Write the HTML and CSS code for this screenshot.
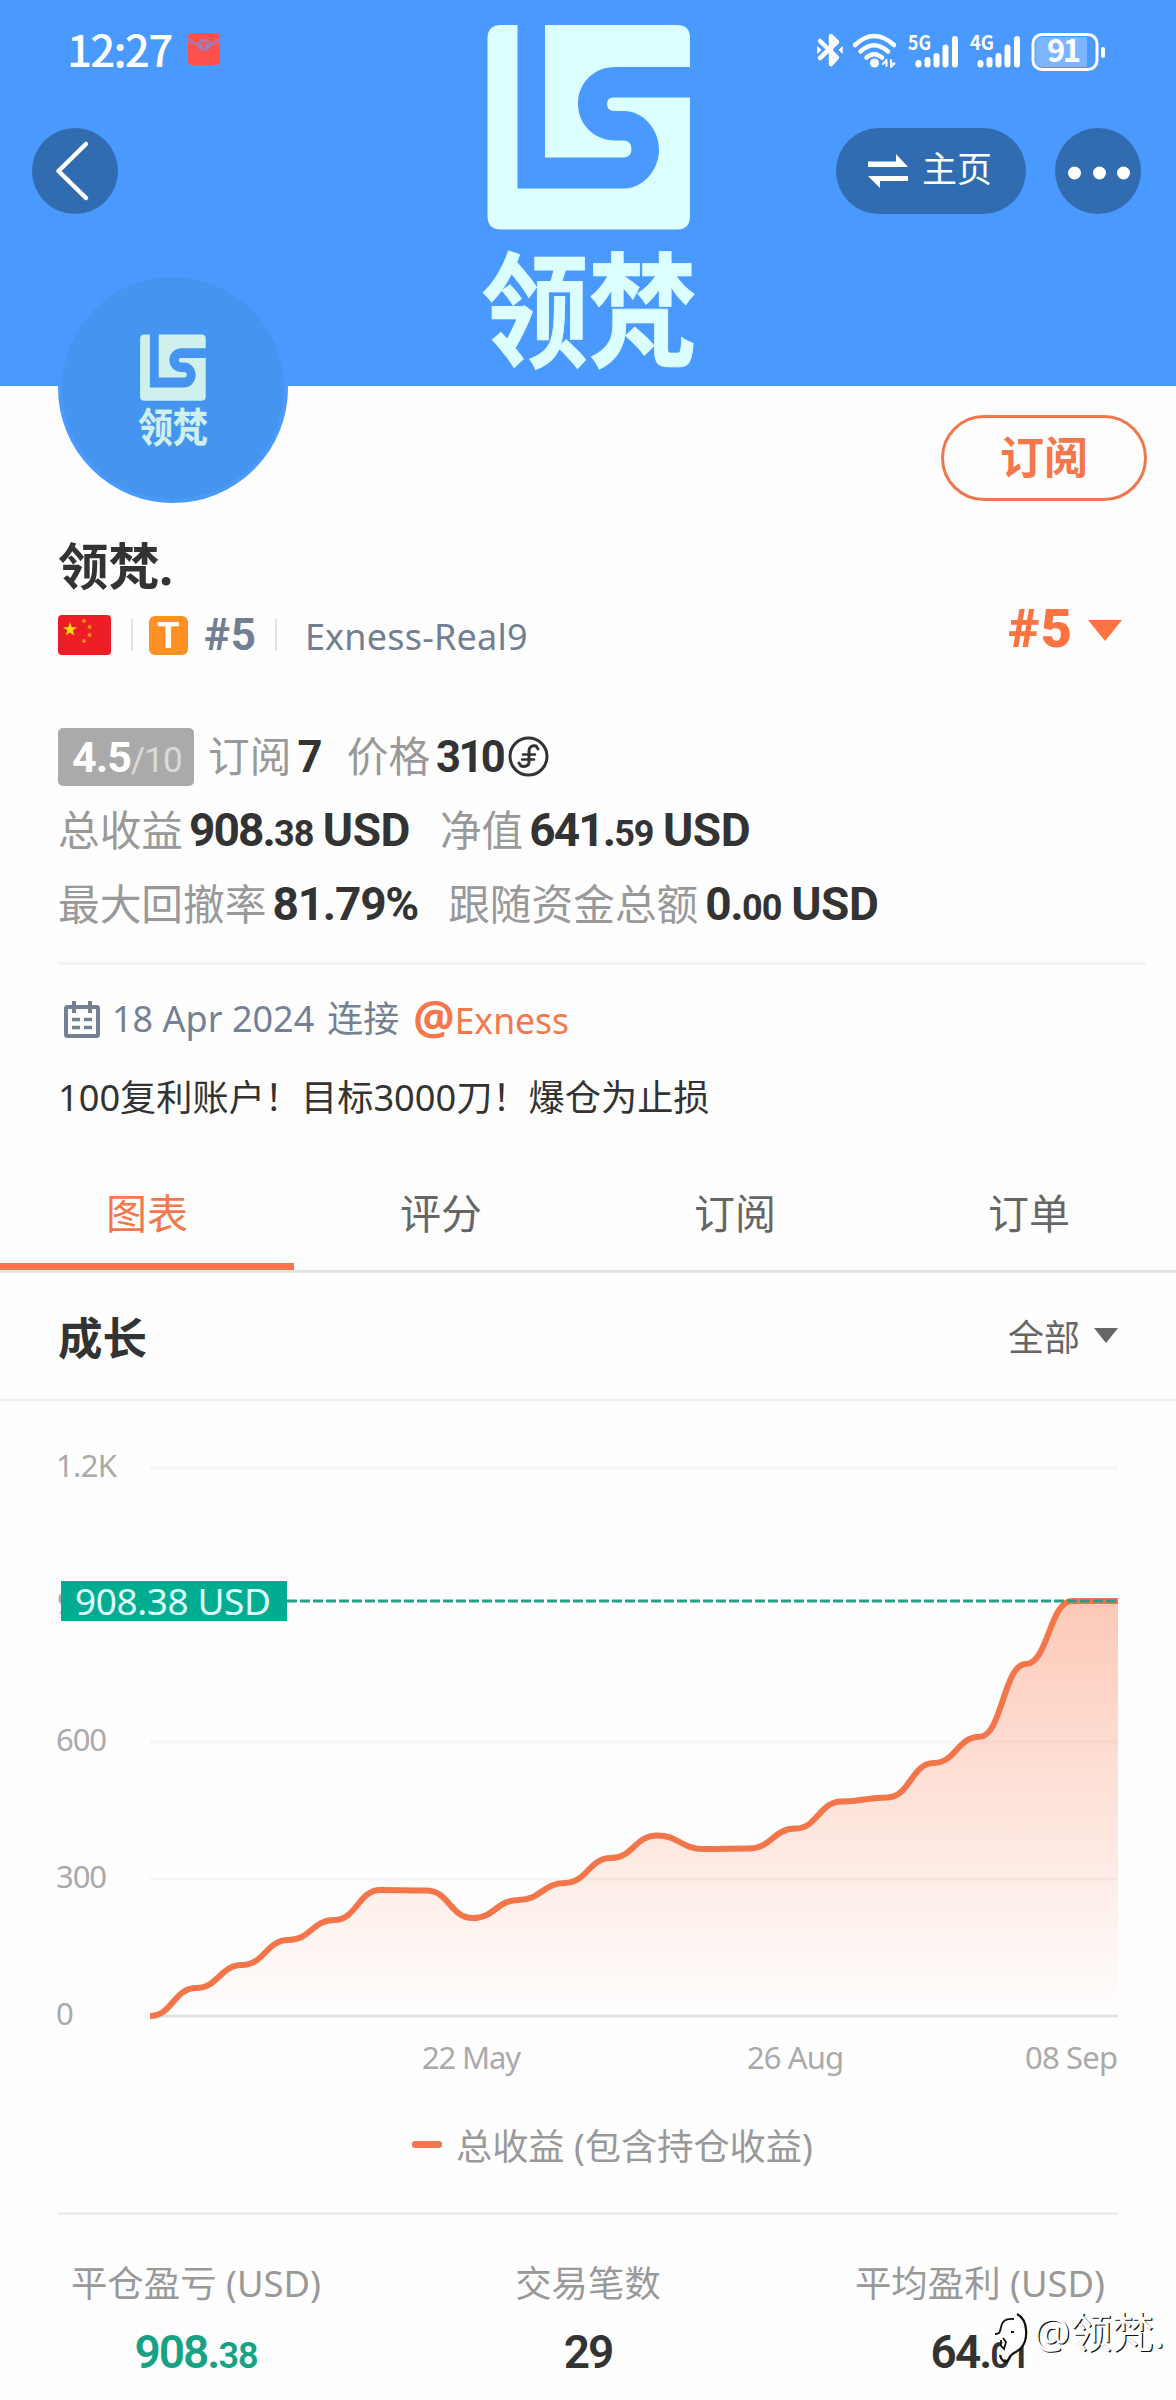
FILE: index.html
```html
<!DOCTYPE html>
<html lang="zh-CN">
<head>
<meta charset="utf-8">
<title>领梵.</title>
<link rel="stylesheet" href="styles.css">
</head>
<body>
<svg width="0" height="0" class="defs">
  <symbol id="logo" viewBox="0 0 216 350">
    <path d="M20 0H36.500V163.500H143C162 163.500 178 145 178 124.500S162 86 143 86H133Q126 86 126 79T133 72.500H209V191Q209 204.500 196 204.500H20Q6.500 204.500 6.500 191V13.500Q6.500 0 20 0Z"/>
    <path d="M64 0H196Q209 0 209 13V42H134C113 42 97 58 97 78.500S113 115.500 134 115.500H142Q150.500 115.500 150.500 124T142 132.500H64Z"/>
    <text class="logo-name" transform="translate(0 332) scale(1 1.15)" textLength="215">领梵</text>
  </symbol>
</svg>
<main class="page">
  <header class="cover">
    <svg class="cover-logo" width="216" height="350"><use href="#logo"/></svg>
    <div class="status">
      <span class="clock">12:27</span>
      <svg class="packet" width="32" height="34" viewBox="0 0 32 34">
        <rect y="1" width="32" height="32" rx="4" fill="#ff514d"/>
        <path d="M0 8Q8 11 10.500 14A6 6 0 0 0 21.500 14Q24 11 32 8" fill="none" stroke="#a47bb4" stroke-width="2.500"/>
        <circle cx="16" cy="12" r="5.500" fill="#a47bb4"/><path d="M13.500 9.500l2.500 3 2.500-3M16 12v4.500" stroke="#ff514d" stroke-width="1.800" fill="none"/>
      </svg>
      <svg class="signals" width="290" height="40" viewBox="0 0 290 40" fill="none" stroke="#fff" stroke-linecap="round" stroke-linejoin="round">
        <path d="M3 11L20 27.500L14 34V6L20 12L3 28" stroke-width="4.500"/>
        <path d="M1 17l3 3-3 3zM25 17l-3 3 3 3z" fill="#fff" stroke-width="1"/>
        <g stroke-width="4.500"><path d="M38 15Q57 -3 77 15"/><path d="M43.500 21.500Q57 9 71 21.500"/><path d="M49.500 27.500Q57 21 65 27.500"/></g>
        <circle cx="57.500" cy="33" r="4.500" fill="#fff" stroke="none"/>
        <path d="M66 34L69.500 30V36M74 30V37L77.500 33.500H74" stroke-width="2"/>
        <g stroke-width="6"><path d="M101.500 33v1.500M110.500 30v4.500M119.500 26v8.500M128.500 17.500v17M138 9v25.500"/><path d="M163.500 33v1.500M172.500 30v4.500M181.500 26v8.500M190.500 17.500v17M200 9v25.500"/></g>
        <g class="net"><text x="91" y="20" textLength="23" lengthAdjust="spacingAndGlyphs">5G</text><text x="153" y="20" textLength="24" lengthAdjust="spacingAndGlyphs">4G</text></g>
        <path d="M225 7H270V37H225Q218.500 37 218.500 30V14Q218.500 7 225 7Z" fill="#fff" fill-opacity=".28" stroke="none"/>
        <rect x="216" y="4.500" width="64" height="35" rx="9" stroke-width="3"/>
        <path d="M286 19v7" stroke-width="4"/>
        <text class="level" x="230" y="32" textLength="34">91</text>
      </svg>
    </div>
    <nav class="actions">
      <button class="round back"><svg width="86" height="86" viewBox="0 0 86 86"><path d="M54 16L26.500 43L54 70" fill="none" stroke="#fff" stroke-width="4.500" stroke-linecap="round" stroke-linejoin="round"/></svg></button>
      <button class="home">
        <svg width="40" height="36" viewBox="0 0 40 36" fill="#fff"><path d="M0 8.500H28V1L40 14H0Z"/><path d="M40 28H12V35L0 23H40Z"/></svg>
        <span>主页</span>
      </button>
      <button class="round"><svg width="86" height="86" viewBox="0 0 86 86" fill="#fff"><circle cx="19.500" cy="45" r="6.500"/><circle cx="44.500" cy="45" r="6.500"/><circle cx="68.500" cy="45" r="6.500"/></svg></button>
    </nav>
  </header>

  <section class="profile">
    <div class="top">
      <div class="avatar"><svg width="70" height="114.500"><use href="#logo"/></svg></div>
      <button class="subscribe">订阅</button>
    </div>
    <h1 class="name">领梵.</h1>
    <div class="meta">
      <div class="account">
        <svg class="flag" width="53" height="40" viewBox="0 0 53 40"><rect width="53" height="40" rx="4" fill="#ee1c25"/><path d="M12 7l1.700 5.200h5.300l-4.300 3.200 1.600 5.100-4.300-3.100-4.300 3.100 1.600-5.100-4.300-3.200h5.300z" fill="#ffde00"/><g fill="#f98a20"><circle cx="26" cy="6" r="2"/><circle cx="31.500" cy="12" r="2"/><circle cx="31.500" cy="20" r="2"/><circle cx="26" cy="26" r="2"/></g></svg>
        <i class="sep"></i>
        <span class="badge">T</span>
        <b class="rank">#5</b>
        <i class="sep second"></i>
        <span class="server">Exness-Real9</span>
      </div>
      <div class="select"><b>#5</b><svg width="34" height="21" viewBox="0 0 34 21"><path d="M0 0H34L17 21Z" fill="#ff7340"/></svg></div>
    </div>

    <div class="facts">
      <p class="fact-row"><span class="score"><b>4.5</b>/10</span><span class="k">订阅</span><b class="v count">7</b><span class="k price">价格</span><b class="v count">310</b><svg class="coin" width="41" height="41" viewBox="0 0 41 41" fill="none" stroke="#333" stroke-linecap="round"><circle cx="20.500" cy="20.500" r="18.500" stroke-width="3"/><path d="M28 10C24 9 21 11 21 15V26C21 30 17 31 13 30M28 10L30 13M13 30L11 27" stroke-width="3"/><path d="M15 18.500H27M14 23.500H26" stroke-width="2.500"/></svg></p>
      <p class="fact-row"><span class="k">总收益</span><b class="v">908.<small>38</small> <em>USD</em></b><span class="k second">净值</span><b class="v">641.<small>59</small> <em>USD</em></b></p>
      <p class="fact-row"><span class="k">最大回撤率</span><b class="v pct">81.79%</b><span class="k second">跟随资金总额</span><b class="v zero">0.<small>00</small> <em>USD</em></b></p>
    </div>

    <div class="connected">
      <svg width="36" height="38" viewBox="0 0 36 38" fill="none" stroke="#748094" stroke-width="4"><rect x="2" y="6" width="32" height="29" rx="1.500"/><path d="M10 0V12M26 0V12"/><path d="M8 18.500H16M20 18.500H28M8 26.500H16M20 26.500H28" stroke-width="3.500"/></svg>
      <span class="date">18 Apr 2024</span><span>连接</span><a class="broker"><b>@</b>Exness</a>
    </div>
    <p class="about">100复利账户！目标3000刀！爆仓为止损</p>
  </section>

  <nav class="tabs"><a class="tab active">图表</a><a class="tab">评分</a><a class="tab">订阅</a><a class="tab">订单</a></nav>

  <section class="growth">
    <div class="growth-head">
      <h2>成长</h2>
      <div class="range">全部 <svg width="24" height="15" viewBox="0 0 24 15"><path d="M0 0H24L12 15Z" fill="#666"/></svg></div>
    </div>
    <svg class="chart" width="1176" height="700" viewBox="0 1401 1176 700">
      <defs><linearGradient id="fill" x1="0" y1="0" x2="0" y2="1"><stop offset="0" stop-color="#fb7446" stop-opacity=".38"/><stop offset="1" stop-color="#fb7446" stop-opacity="0"/></linearGradient></defs>
      <path d="M150 1468H1118M150 1742H1118M150 1879H1118" class="grid"/>
      <path d="M150 2016H1118" class="axis"/>
      <g class="y-labels">
        <text x="56" y="1477" textLength="61">1.2K</text>
        <text x="57" y="1614" textLength="51">900</text>
        <text x="56" y="1751" textLength="51">600</text>
        <text x="56" y="1888" textLength="51">300</text>
        <text x="56" y="2025">0</text>
        <text x="422" y="2069" textLength="99">22 May</text>
        <text x="747" y="2069" textLength="97">26 Aug</text>
        <text x="1025" y="2069" textLength="93">08 Sep</text>
      </g>
      <path id="area" fill="url(#fill)"/>
      <path id="line" class="line"/>
      <path d="M287 1601H1118" class="dash"/>
      <rect x="61" y="1581" width="226" height="40" fill="#00ad90"/>
      <text x="75" y="1615" textLength="196" class="current">908.38 USD</text>
    </svg>
    <div class="legend"><i></i>总收益 (包含持仓收益)</div>
    <div class="totals">
      <div><span>平仓盈亏 (USD)</span><b class="gain">908.<small>38</small></b></div>
      <div><span>交易笔数</span><b>29</b></div>
      <div><span>平均盈利 (USD)</span><b>64.<small>01</small></b></div>
    </div>
  </section>
  <div class="watermark">
    <svg width="41" height="58" viewBox="0 0 41 58"><path d="M8 25C9 10 18 4 27 6C37 12 36 34 28 41C20 45 18 45 15 52L10 50L9 36L12 34L8 25Z" fill="#fff"/><path d="M3 26C8 26 8 24 9 19C10 13 14 10 22 11M9 32V38L12 41L14 34L11 30M19 24H22" fill="none" stroke="#111" stroke-width="1.800"/><path d="M25 6C37 12 36 33 29 40C22 47 20 43 17 51C14 57 9 52 8 47" fill="none" stroke="#111" stroke-width="2.200"/></svg>
    <span>@领梵.</span>
  </div>
</main>
<script src="chart.js"></script>
</body>
</html>
```
FILE: styles.css
```css
* { box-sizing: border-box; margin: 0; padding: 0; }
body { background: #fff; font-family: "Noto Sans", "Noto Sans CJK SC", sans-serif; color: #333; }
button { border: 0; font-family: inherit; }
svg { display: block; flex: none; overflow: visible; }
.defs { position: absolute; }
.page { position: relative; width: 1176px; height: 2400px; overflow: hidden; background: #fefefe; }

.cover { position: relative; height: 386px; background: #4999ff; color: #fff; }
.cover-logo { position: absolute; left: 481px; top: 25px; color: #dcffff; fill: #dcffff; }
.logo-name { font: 700 108px "Noto Sans CJK SC", sans-serif; stroke: currentColor; stroke-width: 0.6px; stroke-linejoin: round; }
.status { display: flex; align-items: flex-start; height: 128px; padding: 30px 69px 0 67px; }
.clock { font: 500 44px/37px "Noto Sans CJK SC", sans-serif; letter-spacing: -1.8px; width: 105px; white-space: nowrap; }
.packet { margin: 2px 0 0 16px; }
.signals { margin-left: auto; }
.net text { font: 700 20px "Noto Sans CJK SC", sans-serif; fill: #fff; stroke: none; }
.level { font: 700 31px "Noto Sans CJK SC", sans-serif; fill: #fff; stroke: none; }
.actions { display: flex; padding: 0 35px 0 32px; }
.round, .home { background: #326cb0; border-radius: 43px; height: 86px; color: #fff; }
.round { width: 86px; }
.back { margin-right: auto; }
.home { width: 190px; margin-right: 29px; display: flex; align-items: center; gap: 14px; padding-left: 32px; font-size: 35px; line-height: 40px; }
.home span { padding-bottom: 4px; }

.profile { padding: 0 29px 0 58px; height: 771px; }
.top { display: flex; justify-content: space-between; height: 150px; }
.avatar { position: relative; width: 230px; height: 230px; margin-top: -113px; border-radius: 50%; border: 4px solid #4999ff; background: #4594ef; padding: 57px 0 0 76px; }
.avatar svg { color: #d0f0ee; fill: #d0f0ee; }
.subscribe { width: 206px; height: 86px; margin-top: 29px; border: 3px solid #ee774c; border-radius: 43px; background: none; color: #f5774b; font-size: 44px; line-height: 76px; font-weight: 700; padding-bottom: 3px; }
.name { font-size: 50.500px; line-height: 60px; height: 69px; }
.meta { display: flex; justify-content: space-between; height: 114px; }
.account { display: flex; align-items: center; height: 40px; margin-top: 10px; line-height: 40px; color: #727f92; }
.sep { width: 2px; height: 32px; margin: 0 16px 0 20px; background: #e4e4e4; }
.sep.second { margin: 0 28px 0 18px; }
.badge { width: 39px; height: 39px; border-radius: 6px; background: #ff9026; color: #fff; font: 700 36px/40px Roboto, sans-serif; text-align: center; }
.rank { font: 700 44px/40px Roboto, sans-serif; letter-spacing: 0.8px; margin-left: 16px; }
.server { font-size: 36px; letter-spacing: 0.2px; white-space: nowrap; padding-top: 3px; }
.select { display: flex; gap: 15px; margin-right: 25px; color: #ff7340; font: 700 54px/48px Roboto, sans-serif; letter-spacing: 1px; }
.select svg { margin-top: 15px; }

.facts { height: 246px; border-bottom: 3px solid #f3f3f3; }
.fact-row { display: flex; align-items: baseline; height: 74px; line-height: 74px; font-size: 41.700px; white-space: nowrap; }
.k { color: #999; margin-right: 6px; }
.k.price { margin-left: 27px; }
.k.second { margin-left: 30px; }
.v { font: 700 46px/74px Roboto, sans-serif; letter-spacing: -1.900px; }
.v.zero { margin-left: 1px; letter-spacing: -1.500px; }
.v.count { font-size: 43.500px; letter-spacing: -2.600px; }
.v.pct { letter-spacing: -1.200px; }
.v small { font-size: 36px; letter-spacing: -1px; }
.v em { font-style: normal; letter-spacing: -0.5px; }
.score { width: 136px; height: 58px; line-height: 58px; border-radius: 5px; background: #aaa; color: #dadada; font-family: Roboto, sans-serif; font-size: 35px; letter-spacing: -1px; padding-left: 14px; margin-right: 14px; }
.score b { font-size: 43px; color: #fff; }
.coin { align-self: center; margin-left: 5px; }

.connected { display: flex; height: 77px; padding: 28px 0 0 6px; line-height: 52px; font-size: 36px; color: #748094; white-space: nowrap; }
.connected svg { margin: 8px 12px 0 0; }
.date { margin-right: 13px; }
.broker { margin-left: 14px; color: #f5774b; font-size: 35.500px; line-height: 46px; }
.broker b { font-size: 46px; line-height: 46px; }
.about { font-size: 36.200px; line-height: 50px; margin-top: 30px; }

.tabs { display: flex; height: 116px; border-bottom: 3px solid #e2e2e2; }
.tab { flex: 1; text-align: center; font-size: 41px; line-height: 112px; color: #666; }
.tab.active { color: #f5774b; border-bottom: 7px solid #f5774b; }

.growth-head { display: flex; justify-content: space-between; align-items: center; height: 128px; padding: 0 58px 2px; border-bottom: 2px solid #f0f0f0; }
.growth-head h2 { font-size: 44.500px; }
.range { display: flex; align-items: center; gap: 14px; font-size: 36px; color: #666; }
.grid { stroke: #f6f6f6; stroke-width: 3; }
.axis { stroke: #e2e2e2; stroke-width: 3; }
.y-labels { font-size: 31px; fill: #aaa; }
.line { fill: none; stroke: #f3764a; stroke-width: 6; }
.dash { stroke: #27a085; stroke-width: 3; stroke-dasharray: 10 3; }
.current { font-size: 37px; fill: #dfffff; }
.legend { display: flex; align-items: center; height: 86px; padding-left: 412px; margin-bottom: 25px; font-size: 36.200px; color: #999; white-space: pre; }
.legend i { width: 30px; height: 7px; border-radius: 3px; background: #ee7950; margin-right: 14px; }
.totals { display: flex; border-top: 3px solid #eee; margin: 0 58px; padding-top: 41px; }
.totals div { flex: 1; display: flex; flex-direction: column; align-items: center; }
.totals div:first-child { margin-left: -58px; }
.totals div:last-child { margin-right: -58px; }
.totals span { font-size: 36.400px; line-height: 54px; color: #999; white-space: nowrap; }
.totals b { font: 600 46px/54px Roboto, sans-serif; letter-spacing: -2px; margin-top: 15px; }
.totals small { font-size: 36px; letter-spacing: -1px; }
.gain { color: #17a286; }

.watermark { position: absolute; left: 992px; top: 2308px; display: flex; color: #fff; font-size: 41.500px; line-height: 49px; text-shadow: 1.200px 1.200px 0 #111; white-space: nowrap; }
```
FILE: chart.js
```js
const values = [2016, 1988, 1965, 1940, 1920, 1890, 1890.5, 1918, 1900, 1883, 1858, 1835.5, 1849, 1848.5, 1828.6, 1801.6, 1797.5, 1763, 1736.7, 1664, 1601, 1601];
const step = 968 / (values.length - 1);
let d = `M150 ${values[0]}`;
for (let i = 1; i < values.length; i++) {
  const x = 150 + i * step;
  d += `C${x - step * 0.52} ${values[i - 1]} ${x - step * 0.48} ${values[i]} ${x} ${values[i]}`;
}
document.getElementById('line').setAttribute('d', d);
document.getElementById('area').setAttribute('d', d + 'V2016H150Z');
```
